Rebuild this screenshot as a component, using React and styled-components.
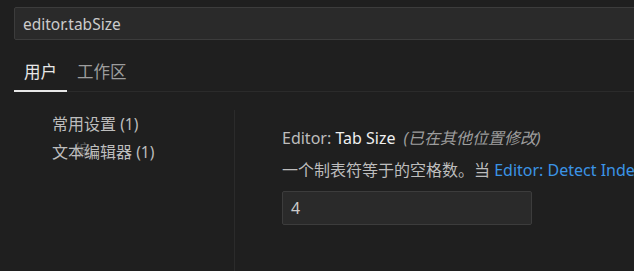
import React from "react";
import styled, { createGlobalStyle } from "styled-components";

const Global = createGlobalStyle`
  html, body { margin: 0; padding: 0; background: #1f1f1f; }
  body {
    font-family: "Noto Sans", "Noto Sans CJK SC", sans-serif;
    color: #cccccc;
    overflow: hidden;
  }
`;

const Page = styled.div`
  width: 634px;
  height: 271px;
  overflow: hidden;
  background: #1f1f1f;
  display: flex;
  flex-direction: column;
  padding: 7px 0 0 14px;
  box-sizing: border-box;
`;

const SearchBox = styled.div`
  width: 660px;
  height: 33px;
  flex-shrink: 0;
  box-sizing: border-box;
  border: 1px solid #3c3c3c;
  border-radius: 2px;
  background: #2a2a2a;
  display: flex;
  align-items: center;
  padding-left: 8px;
  font-size: 15.5px;
  color: #cccccc;
`;

const TabBar = styled.div`
  display: flex;
  flex-shrink: 0;
  margin-top: 11px;
  border-bottom: 1px solid #2b2b2b;
  width: 640px;
`;

const Tab = styled.div`
  padding: 0 10px;
  height: 41px;
  box-sizing: border-box;
  display: flex;
  align-items: center;
  font-size: 16.5px;
  color: ${(p) => (p.$active ? "#e7e7e7" : "#9d9d9d")};
  border-bottom: 2px solid ${(p) => (p.$active ? "#e7e7e7" : "transparent")};
  margin-bottom: -1px;
`;

const Body = styled.div`
  display: flex;
  flex: 1;
  margin-top: 18px;
  min-width: 0;
`;

const Toc = styled.div`
  width: 221px;
  flex-shrink: 0;
  box-sizing: border-box;
  padding: 0 0 0 38px;
  display: flex;
  flex-direction: column;
  border-right: 1px solid #2b2b2b;
`;

const TocItem = styled.div`
  position: relative;
  height: 28px;
  line-height: 28px;
  font-size: 16px;
  color: #bdbdbd;
  white-space: nowrap;
`;

const Ghost = styled.span`
  position: absolute;
  left: 22px;
  top: -2px;
  opacity: 0.35;
  pointer-events: none;
`;

const Count = styled.span`
  font-size: 15.5px;
`;

const Setting = styled.div`
  flex: 1;
  min-width: 0;
  overflow: hidden;
  padding: 17px 0 0 47px;
  display: flex;
  flex-direction: column;
  white-space: nowrap;
`;

const Title = styled.div`
  font-size: 16px;
  line-height: 22px;
  color: #cccccc;
`;

const Category = styled.span`
  color: #bdbdbd;
`;

const Name = styled.span`
  color: #f0f0f0;
`;

const Modified = styled.span`
  font-style: italic;
  color: #9d9d9d;
  margin-left: 8px;
`;

const Desc = styled.div`
  margin-top: 10px;
  font-size: 16px;
  line-height: 22px;
  color: #bdbdbd;
`;

const Link = styled.span`
  color: #3b94e6;
`;

const NumberInput = styled.div`
  margin-top: 10px;
  width: 250px;
  height: 34px;
  box-sizing: border-box;
  border: 1px solid #3c3c3c;
  border-radius: 2px;
  background: #2a2a2a;
  display: flex;
  align-items: center;
  padding-left: 8px;
  font-size: 16px;
  color: #cccccc;
`;

export default function App() {
  return (
    <>
      <Global />
      <Page>
        <SearchBox>editor.tabSize</SearchBox>
        <TabBar>
          <Tab $active>用户</Tab>
          <Tab>工作区</Tab>
        </TabBar>
        <Body>
          <Toc>
            <TocItem>
              常用设置 <Count>(1)</Count>
            </TocItem>
            <TocItem>
              文本编辑器 <Count>(1)</Count>
              <Ghost>编</Ghost>
            </TocItem>
          </Toc>
          <Setting>
            <Title>
              <Category>Editor: </Category>
              <Name>Tab Size</Name>
              <Modified>(已在其他位置修改)</Modified>
            </Title>
            <Desc>
              一个制表符等于的空格数。当 <Link>Editor: Detect Indentation</Link> 启用时，根据文件内容，该设置可能会被覆盖。
            </Desc>
            <NumberInput>4</NumberInput>
          </Setting>
        </Body>
      </Page>
    </>
  );
}
